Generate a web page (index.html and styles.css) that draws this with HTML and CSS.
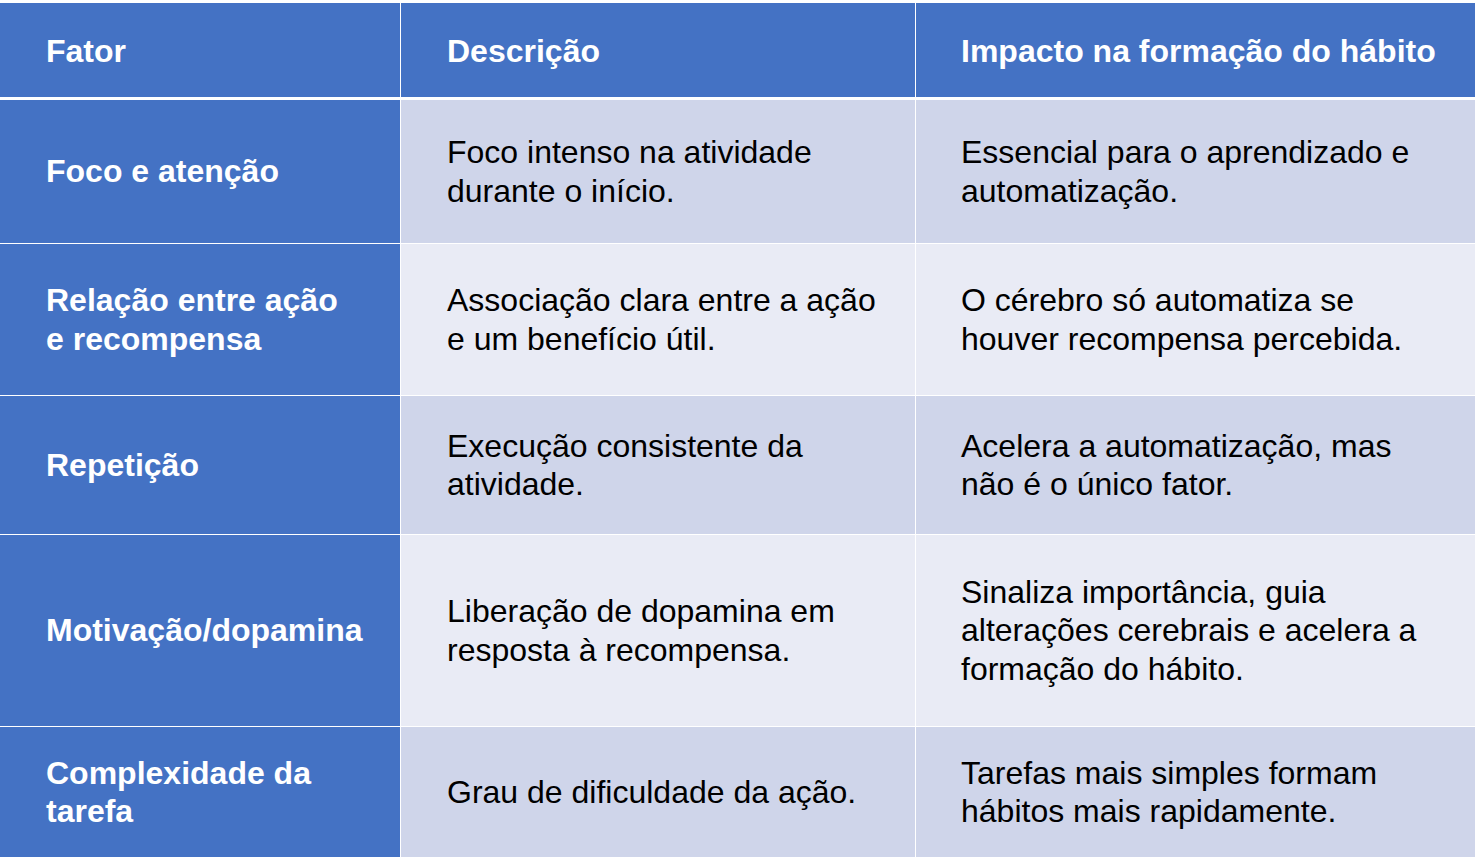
FILE: index.html
```html
<!DOCTYPE html>
<html lang="pt">
<head>
<meta charset="utf-8">
<title>Fatores na formação do hábito</title>
<link rel="stylesheet" href="styles.css">
</head>
<body>
<div class="table">
  <div class="cell head">Fator</div>
  <div class="cell head">Descrição</div>
  <div class="cell head col3">Impacto na formação do hábito</div>

  <div class="cell factor">Foco e atenção</div>
  <div class="cell dark">Foco intenso na atividade<br>durante o início.</div>
  <div class="cell dark col3">Essencial para o aprendizado e<br>automatização.</div>

  <div class="cell factor">Relação entre ação<br>e recompensa</div>
  <div class="cell light">Associação clara entre a ação<br>e um benefício útil.</div>
  <div class="cell light col3">O cérebro só automatiza se<br>houver recompensa percebida.</div>

  <div class="cell factor">Repetição</div>
  <div class="cell dark">Execução consistente da<br>atividade.</div>
  <div class="cell dark col3">Acelera a automatização, mas<br>não é o único fator.</div>

  <div class="cell factor">Motivação/dopamina</div>
  <div class="cell light">Liberação de dopamina em<br>resposta à recompensa.</div>
  <div class="cell light col3">Sinaliza importância, guia<br>alterações cerebrais e acelera a<br>formação do hábito.</div>

  <div class="cell factor">Complexidade da<br>tarefa</div>
  <div class="cell dark">Grau de dificuldade da ação.</div>
  <div class="cell dark col3">Tarefas mais simples formam<br>hábitos mais rapidamente.</div>
</div>
</body>
</html>
```
FILE: styles.css
```css
html, body {
  margin: 0;
  padding: 0;
  background: #ffffff;
}

body {
  padding-top: 3px;
  font-family: "Liberation Sans", Arial, sans-serif;
}

.table {
  display: grid;
  width: 1475px;
  grid-template-columns: 400px 514px 559px;
  grid-template-rows: 96px 143px 151px 138px 191px 130px;
  gap: 1px;
  background: #ffffff;
}

.cell {
  display: flex;
  align-items: center;
  padding-left: 46px;
  padding-right: 10px;
  font-size: 32px;
  line-height: 38.5px;
  color: #000000;
}

.col3 {
  padding-left: 45px;
}

.head {
  background: #4472c4;
  color: #ffffff;
  font-weight: bold;
  margin-bottom: 2px;
  padding-top: 3px;
}

.factor {
  background: #4472c4;
  color: #ffffff;
  font-weight: bold;
}

.dark {
  background: #cfd5ea;
}

.light {
  background: #e9ebf5;
}
```
